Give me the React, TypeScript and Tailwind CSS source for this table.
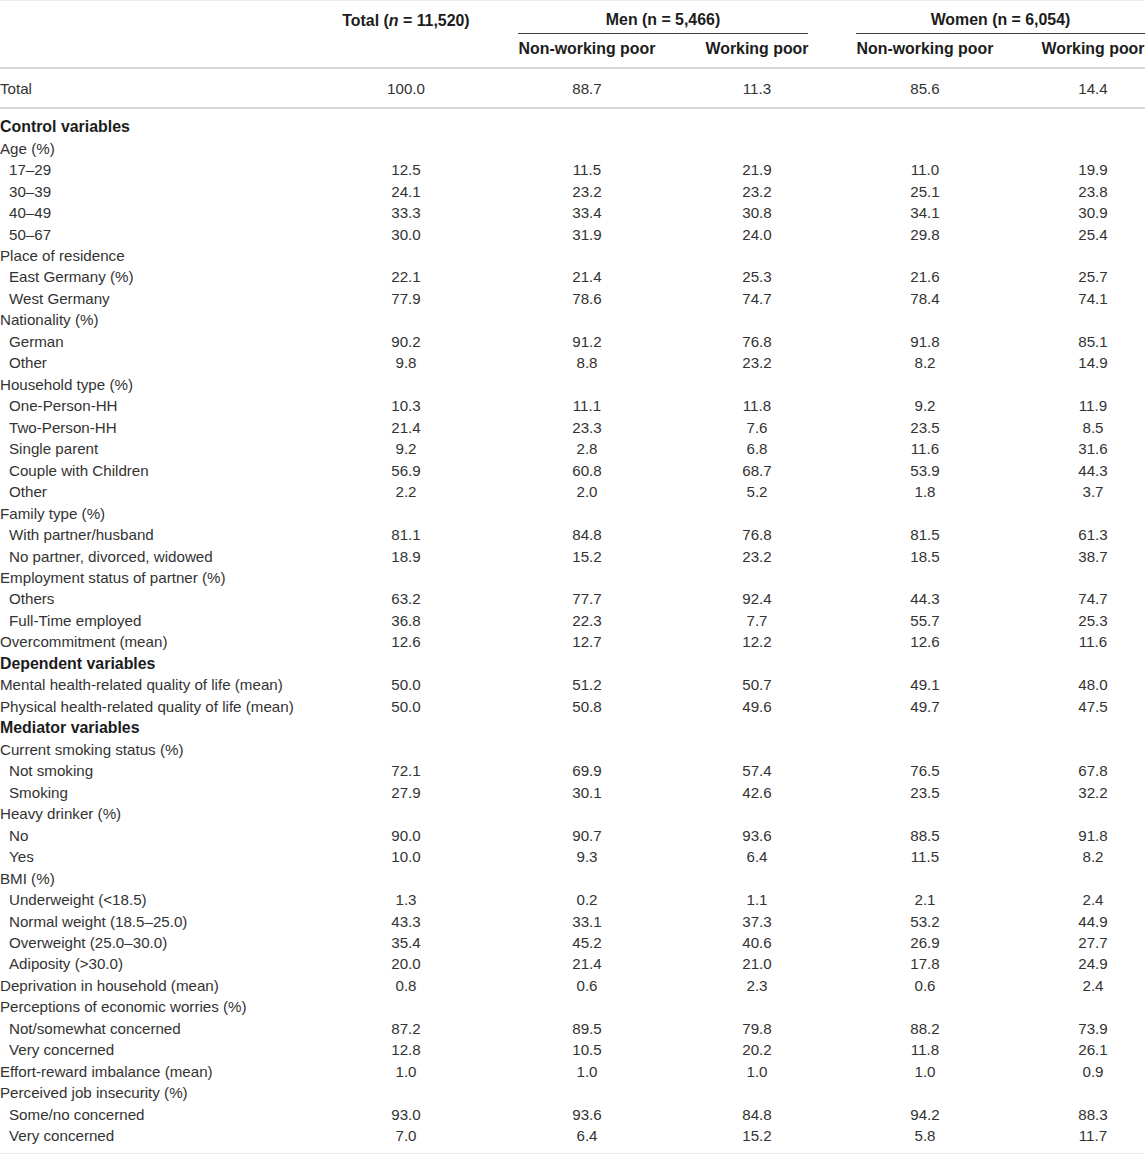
import React from "react";

type Row = { label: string; indent?: boolean; bold?: boolean; v?: string[] };

const rows: Row[] = [
  { label: "Control variables", bold: true },
  { label: "Age (%)" },
  { label: "17–29", indent: true, v: ["12.5", "11.5", "21.9", "11.0", "19.9"] },
  { label: "30–39", indent: true, v: ["24.1", "23.2", "23.2", "25.1", "23.8"] },
  { label: "40–49", indent: true, v: ["33.3", "33.4", "30.8", "34.1", "30.9"] },
  { label: "50–67", indent: true, v: ["30.0", "31.9", "24.0", "29.8", "25.4"] },
  { label: "Place of residence" },
  { label: "East Germany (%)", indent: true, v: ["22.1", "21.4", "25.3", "21.6", "25.7"] },
  { label: "West Germany", indent: true, v: ["77.9", "78.6", "74.7", "78.4", "74.1"] },
  { label: "Nationality (%)" },
  { label: "German", indent: true, v: ["90.2", "91.2", "76.8", "91.8", "85.1"] },
  { label: "Other", indent: true, v: ["9.8", "8.8", "23.2", "8.2", "14.9"] },
  { label: "Household type (%)" },
  { label: "One-Person-HH", indent: true, v: ["10.3", "11.1", "11.8", "9.2", "11.9"] },
  { label: "Two-Person-HH", indent: true, v: ["21.4", "23.3", "7.6", "23.5", "8.5"] },
  { label: "Single parent", indent: true, v: ["9.2", "2.8", "6.8", "11.6", "31.6"] },
  { label: "Couple with Children", indent: true, v: ["56.9", "60.8", "68.7", "53.9", "44.3"] },
  { label: "Other", indent: true, v: ["2.2", "2.0", "5.2", "1.8", "3.7"] },
  { label: "Family type (%)" },
  { label: "With partner/husband", indent: true, v: ["81.1", "84.8", "76.8", "81.5", "61.3"] },
  { label: "No partner, divorced, widowed", indent: true, v: ["18.9", "15.2", "23.2", "18.5", "38.7"] },
  { label: "Employment status of partner (%)" },
  { label: "Others", indent: true, v: ["63.2", "77.7", "92.4", "44.3", "74.7"] },
  { label: "Full-Time employed", indent: true, v: ["36.8", "22.3", "7.7", "55.7", "25.3"] },
  { label: "Overcommitment (mean)", v: ["12.6", "12.7", "12.2", "12.6", "11.6"] },
  { label: "Dependent variables", bold: true },
  { label: "Mental health-related quality of life (mean)", v: ["50.0", "51.2", "50.7", "49.1", "48.0"] },
  { label: "Physical health-related quality of life (mean)", v: ["50.0", "50.8", "49.6", "49.7", "47.5"] },
  { label: "Mediator variables", bold: true },
  { label: "Current smoking status (%)" },
  { label: "Not smoking", indent: true, v: ["72.1", "69.9", "57.4", "76.5", "67.8"] },
  { label: "Smoking", indent: true, v: ["27.9", "30.1", "42.6", "23.5", "32.2"] },
  { label: "Heavy drinker (%)" },
  { label: "No", indent: true, v: ["90.0", "90.7", "93.6", "88.5", "91.8"] },
  { label: "Yes", indent: true, v: ["10.0", "9.3", "6.4", "11.5", "8.2"] },
  { label: "BMI (%)" },
  { label: "Underweight (<18.5)", indent: true, v: ["1.3", "0.2", "1.1", "2.1", "2.4"] },
  { label: "Normal weight (18.5–25.0)", indent: true, v: ["43.3", "33.1", "37.3", "53.2", "44.9"] },
  { label: "Overweight (25.0–30.0)", indent: true, v: ["35.4", "45.2", "40.6", "26.9", "27.7"] },
  { label: "Adiposity (>30.0)", indent: true, v: ["20.0", "21.4", "21.0", "17.8", "24.9"] },
  { label: "Deprivation in household (mean)", v: ["0.8", "0.6", "2.3", "0.6", "2.4"] },
  { label: "Perceptions of economic worries (%)" },
  { label: "Not/somewhat concerned", indent: true, v: ["87.2", "89.5", "79.8", "88.2", "73.9"] },
  { label: "Very concerned", indent: true, v: ["12.8", "10.5", "20.2", "11.8", "26.1"] },
  { label: "Effort-reward imbalance (mean)", v: ["1.0", "1.0", "1.0", "1.0", "0.9"] },
  { label: "Perceived job insecurity (%)" },
  { label: "Some/no concerned", indent: true, v: ["93.0", "93.6", "84.8", "94.2", "88.3"] },
  { label: "Very concerned", indent: true, v: ["7.0", "6.4", "15.2", "5.8", "11.7"] },
];

const GRID = "grid grid-cols-[330px_182px_150px_190px_146px_147px]";

function Values({ v }: { v?: string[] }) {
  const vals = v ?? ["", "", "", "", ""];
  return (
    <>
      <div className="pr-[30px] text-center">{vals[0]}</div>
      <div className="text-center">{vals[1]}</div>
      <div className="text-center">{vals[2]}</div>
      <div className="text-center">{vals[3]}</div>
      <div className="pl-[43px] text-center">{vals[4]}</div>
    </>
  );
}

export default function App() {
  return (
    <div
      className="w-[1145px] overflow-hidden bg-white text-[#333333] text-[15.15px] leading-none"
      style={{ fontFamily: '"Liberation Sans", Arial, sans-serif' }}
    >
      <div className="border-t border-[#ececec]">
        {/* Header row 1 */}
        <div className={`${GRID} h-[33px] text-[15.9px] font-bold text-[#1c1c1c] whitespace-nowrap`}>
          <div />
          <div className="pr-[30px] pt-[6px] flex items-center justify-center">
            <span>
              Total (<i>n</i> = 11,520)
            </span>
          </div>
          <div className="col-span-2 ml-[6px] mr-[44px] pt-[6px] flex items-center justify-center border-b border-[#3a3a3a]">
            Men (n = 5,466)
          </div>
          <div className="col-span-2 ml-[4px] pt-[6px] flex items-center justify-center border-b border-[#3a3a3a]">
            Women (n = 6,054)
          </div>
        </div>
        {/* Header row 2 */}
        <div
          className={`${GRID} h-[35px] pb-[4px] items-center text-[15.9px] font-bold text-[#1c1c1c] whitespace-nowrap border-b-2 border-[#d9d9d9]`}
        >
          <div />
          <div />
          <div className="text-center">Non-working poor</div>
          <div className="text-center">Working poor</div>
          <div className="text-center">Non-working poor</div>
          <div className="pl-[43px] text-center">Working poor</div>
        </div>
        {/* Total row */}
        <div className={`${GRID} h-[40px] pt-[2px] items-center border-b-2 border-[#d9d9d9] whitespace-nowrap`}>
          <div>Total</div>
          <Values v={["100.0", "88.7", "11.3", "85.6", "14.4"]} />
        </div>
        {/* Body */}
        <div className="pt-[7px] pb-[6px] border-b border-[#ececec]">
          {rows.map((r, i) => (
            <div key={i} className={`${GRID} h-[21.47px] items-center whitespace-nowrap`}>
              <div
                className={
                  r.bold
                    ? "font-bold text-[15.9px] text-[#1c1c1c]"
                    : r.indent
                    ? "pl-[9px]"
                    : ""
                }
              >
                {r.label}
              </div>
              <Values v={r.v} />
            </div>
          ))}
        </div>
      </div>
    </div>
  );
}
